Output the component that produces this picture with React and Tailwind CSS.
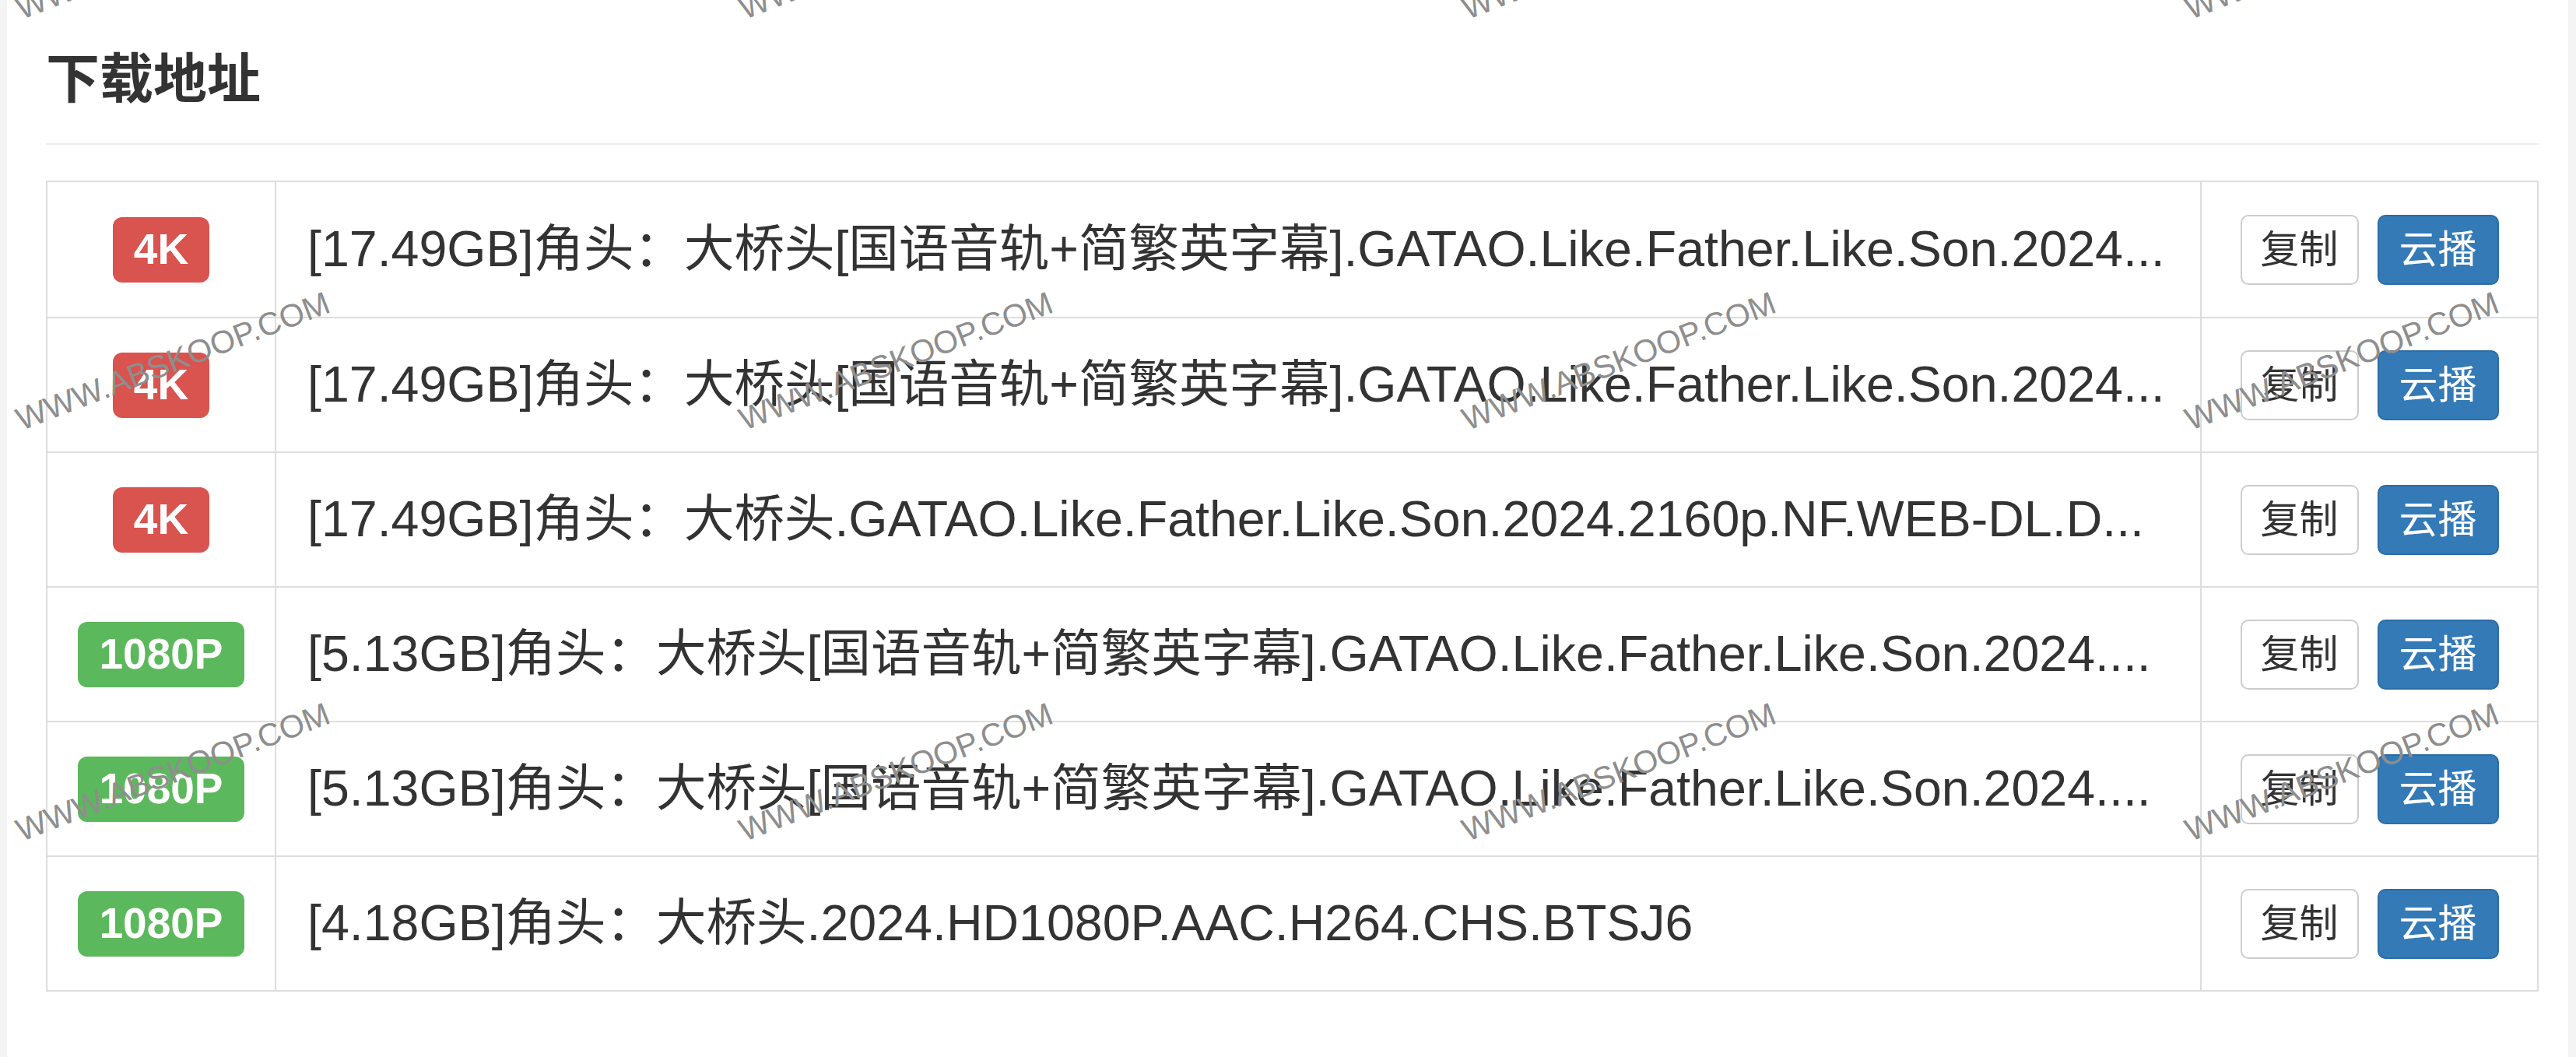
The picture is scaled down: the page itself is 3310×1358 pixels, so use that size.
import React from 'react';

const rows = [
    { q: '4K', text: '[17.49GB]角头：大桥头[国语音轨+简繁英字幕].GATAO.Like.Father.Like.Son.2024...' },
    { q: '4K', text: '[17.49GB]角头：大桥头[国语音轨+简繁英字幕].GATAO.Like.Father.Like.Son.2024...' },
    { q: '4K', text: '[17.49GB]角头：大桥头.GATAO.Like.Father.Like.Son.2024.2160p.NF.WEB-DL.D...' },
    { q: '1080P', text: '[5.13GB]角头：大桥头[国语音轨+简繁英字幕].GATAO.Like.Father.Like.Son.2024....' },
    { q: '1080P', text: '[5.13GB]角头：大桥头[国语音轨+简繁英字幕].GATAO.Like.Father.Like.Son.2024....' },
    { q: '1080P', text: '[4.18GB]角头：大桥头.2024.HD1080P.AAC.H264.CHS.BTSJ6' },
];

// watermark grid (overlay)
const marks = [];
[29, 557, 1085].forEach((y) => {
    [30, 959, 1888, 2817].forEach((x) => marks.push({ x, y }));
});

export default function App() {
    return (
        <div className="relative h-[1358px] overflow-hidden bg-[#f4f4f4] font-['Liberation_Sans','Noto_Sans_CJK_SC',sans-serif] text-[#333]">
            <div className="ml-[9px] mr-[10px] h-full bg-white pl-[50px] pr-[38px] pt-[64px]">
                <h3 className="text-[69px] font-bold leading-[78px] text-[#333]">下载地址</h3>
                <div className="mt-[42px] h-[2px] bg-[#eeeeee]"></div>

                {/* download table */}
                <div className="mt-[46px] border-2 border-[#dddddd]">
                    {rows.map((r, i) => (
                        <div
                            key={i}
                            className={`grid h-[173px] grid-cols-[292px_1fr_433px] ${i > 0 ? 'border-t-2 border-[#dddddd]' : ''}`}
                        >
                            <div className="flex items-center justify-center">
                                <span
                                    className={`inline-flex h-[84px] items-center rounded-[12px] px-[27px] text-[55px] font-bold leading-none text-white ${r.q === '4K' ? 'bg-[#d9534f]' : 'bg-[#5cb85c]'}`}
                                >
                                    {r.q}
                                </span>
                            </div>
                            <div className="flex items-center overflow-hidden whitespace-nowrap border-l-2 border-[#dddddd] pl-[40px] text-[64.5px] leading-none">
                                {r.text}
                            </div>
                            <div className="flex items-center justify-center gap-[24px] border-l-2 border-[#dddddd]">
                                <button className="flex h-[90px] w-[152px] items-center justify-center rounded-[10px] border-2 border-[#cccccc] bg-white text-[50px] leading-none text-[#333]">
                                    复制
                                </button>
                                <button className="flex h-[90px] w-[156px] items-center justify-center rounded-[10px] border-2 border-[#2e6da4] bg-[#337ab7] text-[50px] leading-none text-white">
                                    云播
                                </button>
                            </div>
                        </div>
                    ))}
                </div>
            </div>

            {/* watermark overlay */}
            {marks.map((m, i) => (
                <span
                    key={i}
                    className="pointer-events-none absolute origin-bottom-left -rotate-[21deg] whitespace-nowrap text-[41px] leading-none text-[#8e8e8e]"
                    style={{ left: m.x, top: m.y - 38 }}
                >
                    WWW.ABSKOOP.COM
                </span>
            ))}
        </div>
    );
}
